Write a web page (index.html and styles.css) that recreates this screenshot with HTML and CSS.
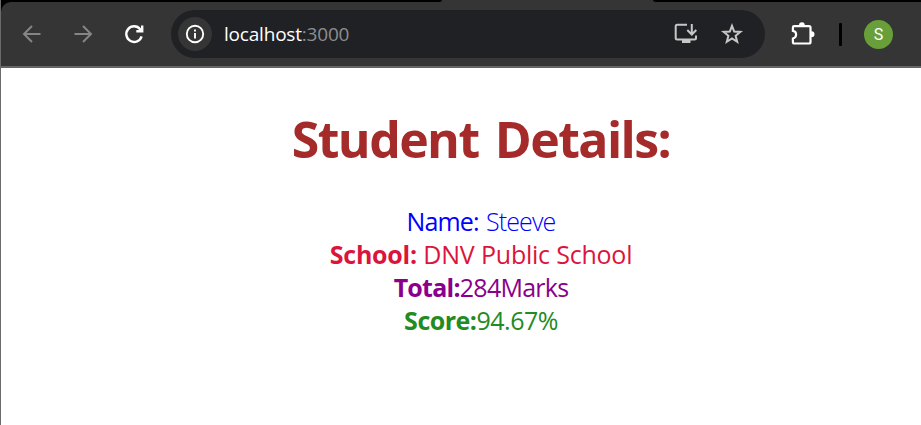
FILE: index.html
```html
<!DOCTYPE html>
<html lang="en">
<head>
<meta charset="utf-8">
<title>Student Details</title>
<link rel="stylesheet" href="styles.css">
</head>
<body>
<div class="window">
  <div class="tabs"><span class="tab-gap left"></span><span class="tab-gap right"></span></div>
  <header class="toolbar">
    <svg class="nav dim" viewBox="0 0 24 24"><path d="M20.5 12H4M12 4l-8 8 8 8"/></svg>
    <svg class="nav dim forward" viewBox="0 0 24 24"><path d="M3.500 12H20M12 4l8 8-8 8"/></svg>
    <svg class="nav reload" viewBox="0 0 24 24"><path d="M19.600 14.300A7.800 7.800 0 1 1 18.200 7.200L20 9M20.200 3.600V9.300H14.300"/></svg>
    <div class="address">
      <span class="info"><svg viewBox="0 0 20 20"><circle cx="10" cy="10" r="8.200"/><path d="M10 9v5.400M10 5.600v2"/></svg></span>
      <span class="url"><b>localhost</b>:3000</span>
      <svg class="install" viewBox="0 0 24 24"><path d="M13 2.700H3.200Q1.700 2.700 1.700 4.200V16Q1.700 17.500 3.200 17.500H20.500Q22 17.500 22 16V13.500M17.800 2v9.500M13.300 8l4.500 4.500L22.300 8"/><path class="solid" d="M8 17h8.500v4H8z"/></svg>
      <svg class="star" viewBox="0 0 22 22"><path d="M11 2.800l2.200 5.700 6.200.4-4.800 3.900 1.600 6-5.200-3.400-5.200 3.400 1.600-6-4.800-3.900 6.200-.4z"/></svg>
    </div>
    <svg class="puzzle" viewBox="0 0 24 24"><path d="M3.200 4.100H18Q19.500 4.100 19.500 5.600V20Q19.500 21.500 18 21.500H3.200Q1.900 21.500 1.900 20.200V16.500C6.200 15.500 6.200 9.500 1.900 8.900V5.400Q1.900 4.100 3.200 4.100Z"/><path class="solid" d="M8 4.300V3.200a2.900 2.900 0 0 1 5.800 0v1.100zM19.500 9.300h1.100a2.900 2.900 0 0 1 0 5.800h-1.100z"/></svg>
    <span class="divider"></span>
    <span class="avatar">S</span>
  </header>
  <main>
    <h1>Student Details:</h1>
    <p class="name"><b>Name:</b> <span>Steeve</span></p>
    <p class="school"><b>School:</b> <span>DNV Public School</span></p>
    <p class="total"><b>Total:</b><span>284Marks</span></p>
    <p class="score"><b>Score:</b><span>94.67%</span></p>
  </main>
</div>
</body>
</html>
```

FILE: styles.css
```css
* { box-sizing: border-box; }
body { margin: 0; background: #fff; font-family: "Open Sans", "Noto Sans", sans-serif; }
.window { height: 425px; border-left: 1px solid #6b6b6b; overflow: hidden; background: linear-gradient(#000 20px, #fff 20px); }
.tabs { height: 2px; background: #353535; display: flex; justify-content: space-between; }
.tab-gap { height: 2px; background: #000; }
.tab-gap.left { width: 441px; border-bottom-right-radius: 4px 2px; }
.tab-gap.right { width: 268px; border-bottom-left-radius: 4px 2px; }
.toolbar { height: 66px; background: #353535; border-top-left-radius: 10px; border-bottom: 2px solid #686466; display: flex; align-items: center; padding-left: 19px; }
svg { fill: none; stroke: currentColor; flex: none; display: block; }
.nav { width: 24px; height: 24px; stroke-width: 2; }
.dim { color: #858585; }
.forward { margin-left: 27px; }
.reload { margin-left: 27px; color: #fff; stroke-width: 2.400; }
.address { width: 594px; height: 48px; margin-left: 25px; border-radius: 24px; background: #202124; display: flex; align-items: center; padding-left: 7px; }
.info { width: 34px; height: 34px; border-radius: 50%; background: #353535; color: #fff; display: grid; place-items: center; flex: none; }
.info svg { width: 20px; height: 20px; stroke-width: 1.900; }
.url { width: 450px; margin-left: 12px; font-size: 19px; line-height: 26px; letter-spacing: -.2px; color: #8d8e90; }
.url b { font-weight: 400; color: #fff; }
.install { width: 24px; height: 24px; color: #c7c7c7; stroke-width: 2; }
.solid { fill: currentColor; stroke: none; }
.star { width: 22px; height: 22px; color: #c7c7c7; stroke-width: 2; margin-left: 23px; }
.puzzle { width: 24px; height: 24px; color: #fff; stroke-width: 2.200; margin-left: 26px; }
.divider { width: 3px; height: 23px; border-radius: 1px; background: #000; margin-left: 24px; }
.avatar { width: 29px; height: 29px; border-radius: 50%; margin-left: 22px; background: #689f38; color: #fff; font: 16px/29px Roboto, sans-serif; text-align: center; }
main { text-align: center; padding: 38px 0 0 40px; }
h1 { margin: 0 0 32px; font-size: 50px; line-height: 67px; font-weight: 700; letter-spacing: -1.6px; word-spacing: 5px; color: brown; white-space: nowrap; }
p { margin: 0; font-size: 25px; line-height: 33px; font-weight: 400; white-space: nowrap; }
.name { color: blue; letter-spacing: -.85px; word-spacing: 1.500px; }
.name b { font-weight: 400; }
.name span { font-weight: 300; }
.school { color: crimson; letter-spacing: -.25px; word-spacing: .3px; }
.total { color: darkmagenta; letter-spacing: -.75px; }
.score { color: forestgreen; letter-spacing: -.5px; }
```
